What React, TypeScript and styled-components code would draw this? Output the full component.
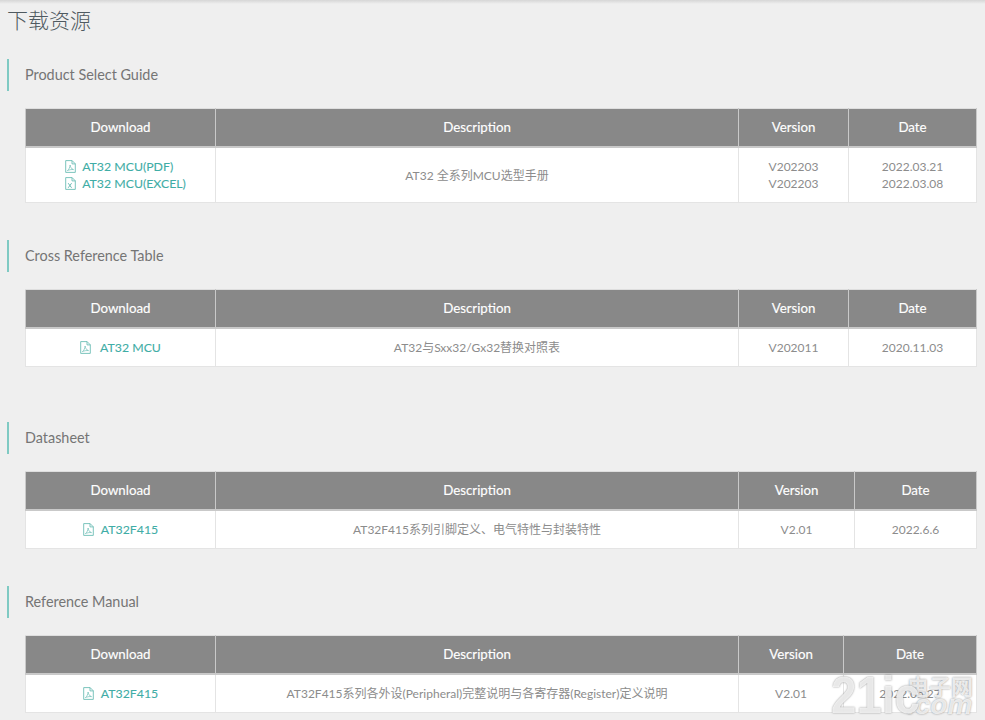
import React, { FC } from 'react';
import styled, { createGlobalStyle } from 'styled-components';

const FONT = `Lato, "Noto Sans CJK SC", sans-serif`;

const GlobalStyle = createGlobalStyle`
    html, body {
        margin: 0;
        padding: 0;
        height: 720px;
        overflow: hidden;
        background: #efefef;
    }
`;

type FileKind = 'pdf' | 'xls';

interface Row {
    links: { kind: FileKind; label: string }[];
    iconGap: number;
    indent: number;
    description: string;
    versions: string[];
    dates: string[];
}

interface Section {
    title: string;
    widths: number[];
    after: number;
    row: Row;
}

const sections: Section[] = [
    {
        title: 'Product Select Guide',
        widths: [190, 523, 110, 128],
        after: 37,
        row: {
            links: [
                { kind: 'pdf', label: 'AT32 MCU(PDF)' },
                { kind: 'xls', label: 'AT32 MCU(EXCEL)' },
            ],
            iconGap: 6,
            indent: 10,
            description: 'AT32 全系列MCU选型手册',
            versions: ['V202203', 'V202203'],
            dates: ['2022.03.21', '2022.03.08'],
        },
    },
    {
        title: 'Cross Reference Table',
        widths: [190, 523, 110, 128],
        after: 55,
        row: {
            links: [{ kind: 'pdf', label: 'AT32 MCU' }],
            iconGap: 9,
            indent: 0,
            description: 'AT32与Sxx32/Gx32替换对照表',
            versions: ['V202011'],
            dates: ['2020.11.03'],
        },
    },
    {
        title: 'Datasheet',
        widths: [190, 523, 116, 122],
        after: 37,
        row: {
            links: [{ kind: 'pdf', label: 'AT32F415' }],
            iconGap: 7,
            indent: 0,
            description: 'AT32F415系列引脚定义、电气特性与封装特性',
            versions: ['V2.01'],
            dates: ['2022.6.6'],
        },
    },
    {
        title: 'Reference Manual',
        widths: [190, 523, 105, 133],
        after: 0,
        row: {
            links: [{ kind: 'pdf', label: 'AT32F415' }],
            iconGap: 7,
            indent: 0,
            description: 'AT32F415系列各外设(Peripheral)完整说明与各寄存器(Register)定义说明',
            versions: ['V2.01'],
            dates: ['2022.05.27'],
        },
    },
];

const FileIcon: FC<{ kind: FileKind; gap: number }> = ({ kind, gap }) => (
    <IconSvg $gap={gap} viewBox="0 0 11 13" fill="none" stroke="#6dbdb6" strokeWidth="0.9">
        <path d="M.7 .6h6.4l3.2 3.2v8.6H.7z" />
        <path d="M7 .6v3.3h3.3" />
        {kind === 'pdf'
            ? <path d="M2.4 10.6c1.4-1 2.5-3 2.7-5.6.4 2.4 1.4 4 3.4 4.6-2.1-.2-4.100.1-6.100 1z" strokeWidth="0.7" />
            : <path d="M3.200 6.200l3.400 4.600M6.600 6.200l-3.400 4.600" strokeWidth="1" />}
    </IconSvg>
);

const App: FC = () => (
    <Page>
        <GlobalStyle />
        <PageTitle>下载资源</PageTitle>
        {sections.map((section) => (
            <Block key={section.title} $after={section.after}>
                <BlockTitle>{section.title}</BlockTitle>
                <Table>
                    <colgroup>
                        {section.widths.map((w, i) => <col key={i} width={w} />)}
                    </colgroup>
                    <thead>
                        <tr>
                            <HeadCell>Download</HeadCell>
                            <HeadCell>Description</HeadCell>
                            <HeadCell>Version</HeadCell>
                            <HeadCell>Date</HeadCell>
                        </tr>
                    </thead>
                    <tbody>
                        <tr>
                            <BodyCell>
                                <LinkStack $indent={section.row.indent}>
                                    {section.row.links.map((link) => (
                                        <FileLink key={link.label} href="#">
                                            <FileIcon kind={link.kind} gap={section.row.iconGap} />
                                            {link.label}
                                        </FileLink>
                                    ))}
                                </LinkStack>
                            </BodyCell>
                            <BodyCell>{section.row.description}</BodyCell>
                            <BodyCell>
                                {section.row.versions.map((v, i) => <Line key={i}>{v}</Line>)}
                            </BodyCell>
                            <BodyCell>
                                {section.row.dates.map((d, i) => <Line key={i}>{d}</Line>)}
                            </BodyCell>
                        </tr>
                    </tbody>
                </Table>
            </Block>
        ))}
        <Watermark>
            <WatermarkBig>21ic</WatermarkBig>
            <WatermarkSide>
                <WatermarkCn>电子网</WatermarkCn>
                <WatermarkDot>.com</WatermarkDot>
            </WatermarkSide>
        </Watermark>
    </Page>
);

export default App;

const Page = styled.div`
    position: relative;
    height: 720px;
    overflow: hidden;
    padding: 7px 8px 0 7px;
    box-sizing: border-box;
    font-family: ${FONT};
    background: #efefef;

    &::before {
        content: '';
        position: absolute;
        top: 0;
        left: 0;
        right: 0;
        height: 4px;
        background: linear-gradient(#d6d6d6, #efefef);
    }
`;

const PageTitle = styled.h1`
    margin: 0 0 27px;
    font-size: 21px;
    line-height: 25px;
    font-weight: 300;
    color: #4f5a60;
`;

const Block = styled.section<{ $after: number }>`
    margin-bottom: ${(p) => p.$after}px;
`;

const BlockTitle = styled.h2`
    margin: 0 0 17px;
    height: 32px;
    padding-left: 16px;
    border-left: 2px solid #7fcac3;
    font-size: 14.4px;
    line-height: 32px;
    font-weight: 400;
    color: #757575;
`;

const Table = styled.table`
    margin-left: 18px;
    width: 951px;
    table-layout: fixed;
    border-collapse: collapse;
    background: #fff;
`;

const HeadCell = styled.th`
    height: 36px;
    padding: 0 0 1px;
    box-sizing: content-box;
    background: #888;
    border: 1px solid #c9c9c9;
    border-top-color: #dedede;
    border-bottom: 2px solid #c9c9c9;
    color: #fff;
    font-size: 13.3px;
    font-weight: 400;
    text-align: center;
    -webkit-text-stroke: 0.15px #fff;
`;

const BodyCell = styled.td`
    padding: 10px 0;
    border: 1px solid #e4e4e4;
    color: #8c8c8c;
    font-size: 12px;
    line-height: 17px;
    text-align: center;
`;

const Line = styled.div`
    line-height: 17px;
`;

const LinkStack = styled.div<{ $indent: number }>`
    display: inline-flex;
    flex-direction: column;
    align-items: flex-start;
    padding-left: ${(p) => p.$indent}px;
`;

const FileLink = styled.a`
    display: block;
    color: #3fada6;
    font-size: 12.3px;
    line-height: 17px;
    text-decoration: none;
    -webkit-text-stroke: 0.1px #3fada6;
`;

const IconSvg = styled.svg<{ $gap: number }>`
    width: 11px;
    height: 13px;
    margin-right: ${(p) => p.$gap}px;
    vertical-align: -2px;
`;

const Watermark = styled.div`
    position: absolute;
    left: 831px;
    top: 675px;
    display: flex;
    align-items: flex-start;
    gap: 5px;
    color: rgba(255, 255, 255, 0.8);
    text-shadow: 0 0 2px rgba(110, 110, 110, 0.8);
    pointer-events: none;
`;

const WatermarkBig = styled.div`
    width: 71px;
    font-family: "Liberation Sans", sans-serif;
    font-size: 52px;
    line-height: 40px;
    font-weight: 700;
    transform: scaleX(0.88);
    transform-origin: left top;
    white-space: nowrap;
`;

const WatermarkSide = styled.div`
    display: flex;
    flex-direction: column;
    align-items: flex-start;
`;

const WatermarkCn = styled.div`
    font-family: "Noto Sans CJK SC", sans-serif;
    font-size: 22px;
    line-height: 20px;
    font-weight: 700;
    white-space: nowrap;
`;

const WatermarkDot = styled.div`
    font-family: "Liberation Sans", sans-serif;
    font-size: 28px;
    line-height: 20px;
    font-weight: 700;
    font-style: italic;
`;
